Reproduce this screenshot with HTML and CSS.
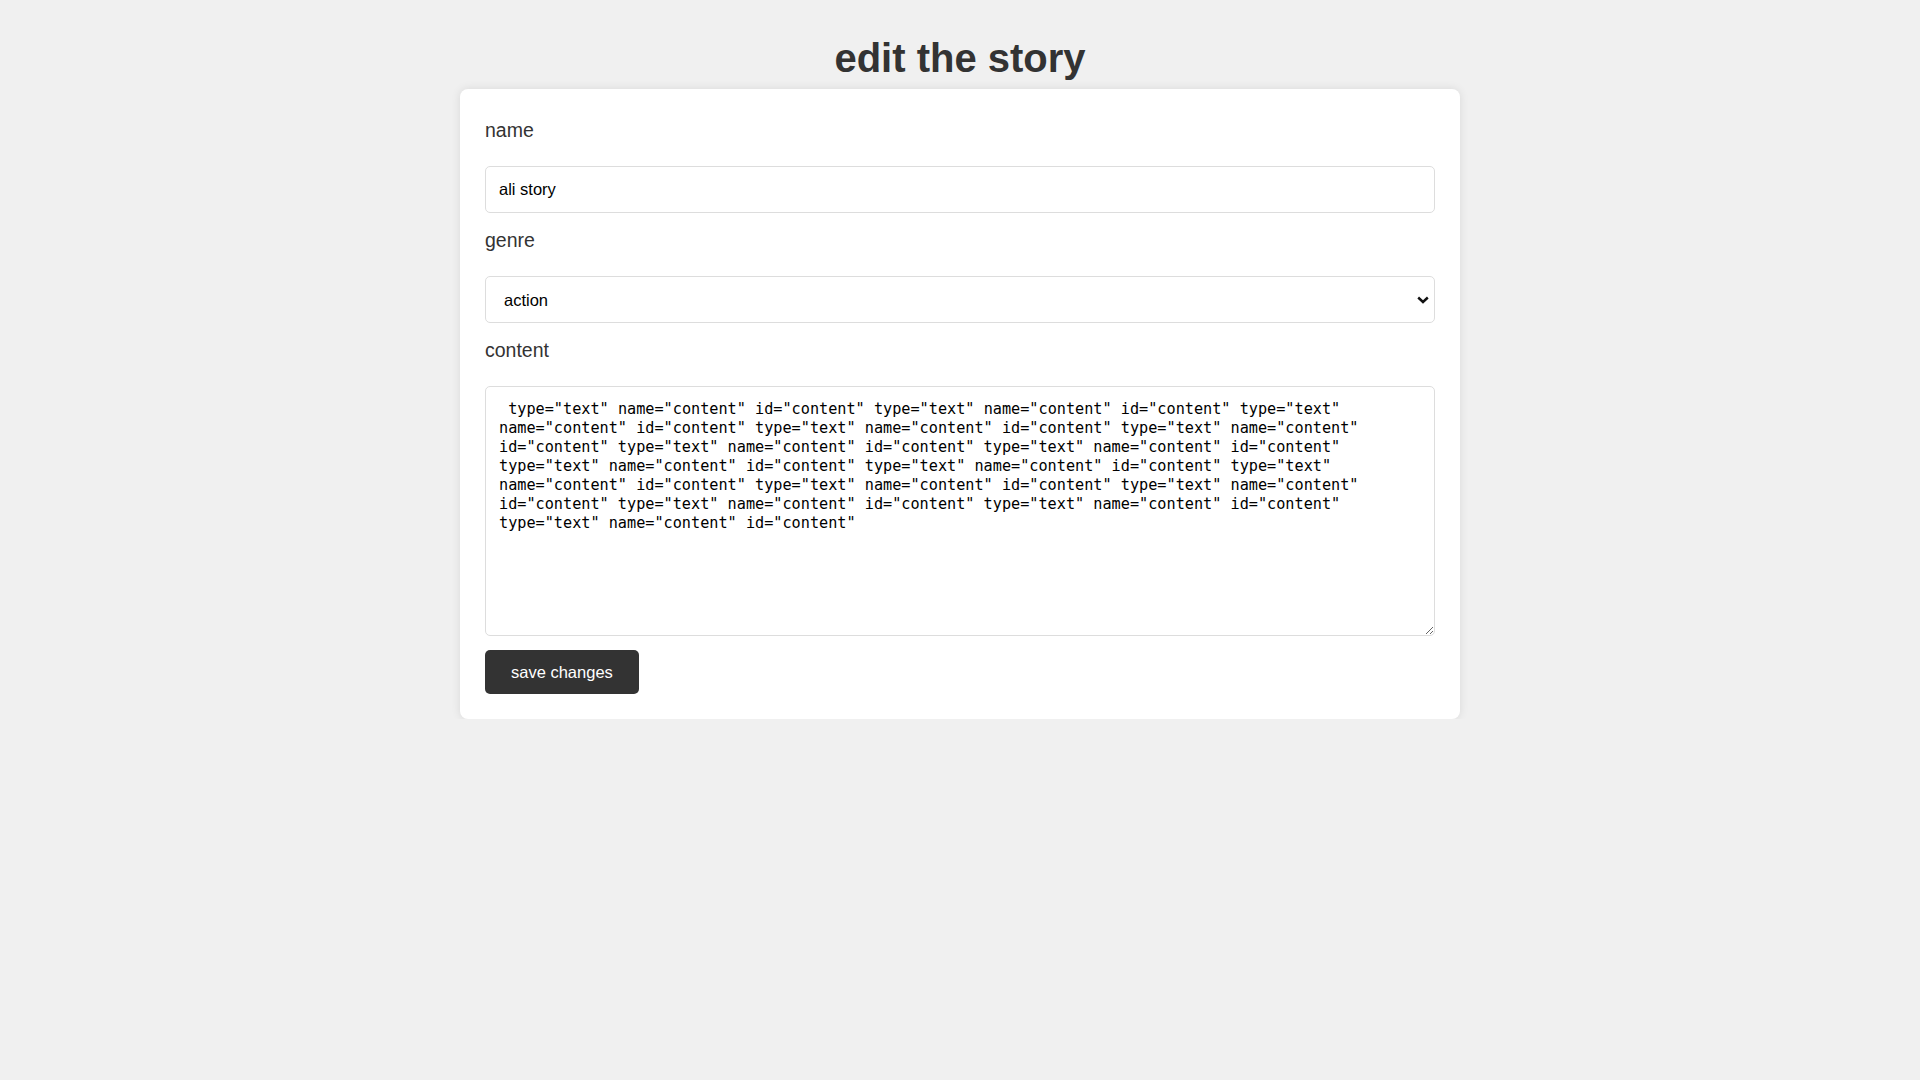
FILE: index.html
```html
<!DOCTYPE html>
<html lang="en">
<head>
<meta charset="utf-8">
<title>edit the story</title>
<link rel="stylesheet" href="styles.css">
</head>
<body>
<main class="page">
  <h1 class="title">edit the story</h1>
  <form class="card">
    <label class="label" for="name">name</label>
    <input class="field" type="text" id="name" name="name" value="ali story">
    <label class="label" for="genre">genre</label>
    <div class="select-wrap">
      <select class="field select" id="genre" name="genre">
        <option selected>action</option>
        <option>drama</option>
        <option>comedy</option>
      </select>
      <svg class="chevron" width="12" height="8" viewBox="0 0 12 8" aria-hidden="true"><path d="M1.2 1.5 L6 6 L10.8 1.5" fill="none" stroke="#111" stroke-width="2.4"/></svg>
    </div>
    <label class="label" for="content">content</label>
    <textarea class="textarea" id="content" name="content"> type="text" name="content" id="content" type="text" name="content" id="content" type="text" name="content" id="content" type="text" name="content" id="content" type="text" name="content" id="content" type="text" name="content" id="content" type="text" name="content" id="content" type="text" name="content" id="content" type="text" name="content" id="content" type="text" name="content" id="content" type="text" name="content" id="content" type="text" name="content" id="content" type="text" name="content" id="content" type="text" name="content" id="content" type="text" name="content" id="content"</textarea>
    <div class="actions">
      <button class="btn" type="button">save changes</button>
    </div>
  </form>
</main>
</body>
</html>
```
FILE: styles.css
```css
* { box-sizing: border-box; }
html, body { margin: 0; padding: 0; }
body {
  background: #f0f0f0;
  font-family: "Liberation Sans", Arial, sans-serif;
  color: #333;
}
.page {
  display: flex;
  flex-direction: column;
  align-items: center;
}
.title {
  margin: 36px 0 9px;
  font-size: 40px;
  line-height: 44px;
  font-weight: bold;
  color: #333;
  text-align: center;
}
.card {
  width: 1000px;
  background: #fff;
  border-radius: 8px;
  box-shadow: 0 0 10px rgba(0, 0, 0, 0.1);
  padding: 26px 25px 25px;
  display: flex;
  flex-direction: column;
}
.label {
  display: block;
  font-size: 19.5px;
  line-height: 23px;
  margin: 4px 0 24px;
  color: #333;
}
.field {
  display: block;
  width: 100%;
  height: 47px;
  margin: 0 0 12px;
  padding: 0 13px;
  border: 1px solid #ddd;
  border-radius: 5px;
  background: #fff;
  font-family: "Liberation Sans", Arial, sans-serif;
  font-size: 16.5px;
  color: #000;
}
.select-wrap {
  position: relative;
}
.select {
  appearance: none;
  -webkit-appearance: none;
  padding: 0 30px 0 18px;
}
.chevron {
  position: absolute;
  right: 6px;
  top: 20px;
  pointer-events: none;
}
.textarea {
  display: block;
  width: 100%;
  height: 250px;
  margin: 0 0 14px;
  padding: 13px 13px;
  border: 1px solid #ddd;
  border-radius: 5px;
  background: #fff;
  font-family: "DejaVu Sans Mono", monospace;
  font-size: 15.2px;
  line-height: 19px;
  color: #000;
  resize: vertical;
}
.actions {
  display: flex;
}
.btn {
  height: 44px;
  padding: 0 26px;
  border: none;
  border-radius: 5px;
  background: #333;
  color: #fff;
  font-family: "Liberation Sans", Arial, sans-serif;
  font-size: 16.5px;
  cursor: pointer;
}
```
